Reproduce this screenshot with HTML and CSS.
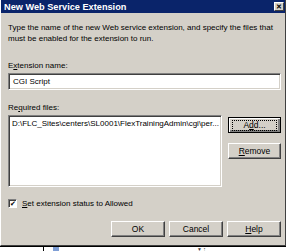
FILE: index.html
```html
<!DOCTYPE html>
<html lang="en">
<head>
    <meta charset="UTF-8">
    <title>New Web Service Extension</title>
    <link rel="stylesheet" href="styles.css">
</head>
<body>
    <div class="window">
        <div class="titlebar">
            <span class="title">New Web Service Extension</span>
            <span class="close">&#x2715;</span>
        </div>
        <div class="content">
            <p class="intro">Type the name of the new Web service extension, and specify the files that must be enabled for the extension to run.</p>

            <label class="field-label">E<u>x</u>tension name:</label>
            <div class="textbox">CGI Script</div>

            <label class="field-label">Re<u>q</u>uired files:</label>
            <div class="files-row">
                <div class="listbox">
                    <div class="list-item">D:\FLC_Sites\centers\SL0001\FlexTrainingAdmin\cgi\per...</div>
                </div>
                <div class="side-buttons">
                    <button class="btn focused"><span class="focus-ring">A<u>d</u>d...</span></button>
                    <button class="btn"><u>R</u>emove</button>
                </div>
            </div>

            <div class="check-row">
                <span class="checkbox">&#x2714;</span>
                <span><u>S</u>et extension status to Allowed</span>
            </div>

            <div class="actions">
                <button class="btn">OK</button>
                <button class="btn">Cancel</button>
                <button class="btn"><u>H</u>elp</button>
            </div>
        </div>
    </div>
    <div class="behind">
        <span class="behind-divider"></span>
        <span class="behind-icon"></span>
        <span class="behind-arrows">&#x25BC; &#x2191;</span>
    </div>
</body>
</html>
```

FILE: styles.css
```css
body {
    margin: 0;
    width: 286px;
    height: 251px;
    overflow: hidden;
    font-family: "Liberation Sans", Tahoma, sans-serif;
    font-size: 8px;
    color: #000;
    background: #fff;
}
u {
    text-decoration: underline;
}
.window {
    height: 246px;
    box-sizing: border-box;
    background: #d4d0c8;
    border-left: 1px solid #fff;
    border-right: 1px solid #404040;
    border-bottom: 1px solid #404040;
    display: flex;
    flex-direction: column;
}
.titlebar {
    height: 13px;
    background: #0a246a;
    display: flex;
    align-items: center;
    justify-content: space-between;
    padding: 0 1px 0 3px;
}
.title {
    color: #fff;
    font-weight: bold;
    font-size: 9.2px;
}
.close {
    width: 10px;
    height: 9px;
    background: #d4d0c8;
    border: 1px solid;
    border-color: #fff #404040 #404040 #fff;
    font-size: 7px;
    font-weight: bold;
    line-height: 8px;
    text-align: center;
    box-sizing: border-box;
}
.content {
    flex: 1;
    padding: 0 4px 0 7px;
    display: flex;
    flex-direction: column;
}
.intro {
    margin: 9px 0 0;
    line-height: 11px;
    padding-right: 3px;
}
.field-label {
    display: block;
    line-height: 11px;
}
.intro + .field-label {
    margin-top: 16px;
}
.textbox {
    margin-top: 2px;
    height: 17px;
    box-sizing: border-box;
    background: #fff;
    border: 1px solid;
    border-color: #808080 #fff #fff #808080;
    box-shadow: inset 1px 1px #404040, inset -1px -1px #d4d0c8;
    padding: 0 4px;
    line-height: 15px;
}
.textbox + .field-label {
    margin-top: 12px;
}
.files-row {
    margin-top: 2px;
    display: flex;
    gap: 6px;
}
.listbox {
    width: 216px;
    height: 72px;
    box-sizing: border-box;
    background: #fff;
    border: 1px solid;
    border-color: #808080 #fff #fff #808080;
    box-shadow: inset 1px 1px #404040, inset -1px -1px #d4d0c8;
    padding: 2px 3px;
    overflow: hidden;
}
.list-item {
    white-space: nowrap;
    line-height: 11px;
}
.side-buttons {
    display: flex;
    flex-direction: column;
    gap: 10px;
    padding-top: 2px;
}
.btn {
    font-family: inherit;
    font-size: 8.5px;
    color: #000;
    width: 54px;
    height: 16px;
    padding: 0;
    background: #d4d0c8;
    border: 1px solid;
    border-color: #fff #404040 #404040 #fff;
    box-shadow: inset -1px -1px #808080;
    border-radius: 0;
}
.side-buttons .btn {
    width: 53px;
}
.btn.focused {
    border: 1px solid #000;
    box-shadow: inset 1px 1px #fff, inset -2px -2px #808080;
    display: flex;
    align-items: center;
    justify-content: center;
}
.focus-ring {
    width: 43px;
    height: 9px;
    line-height: 9px;
    border: 1px dotted #000;
}
.check-row {
    margin-top: 12px;
    display: flex;
    align-items: center;
    gap: 5px;
}
.checkbox {
    width: 9px;
    height: 9px;
    box-sizing: border-box;
    background: #fff;
    border: 1px solid;
    border-color: #808080 #fff #fff #808080;
    box-shadow: inset 1px 1px #404040;
    font-size: 7px;
    line-height: 8px;
    text-align: center;
}
.actions {
    margin-top: 13px;
    display: flex;
    justify-content: flex-end;
    gap: 4px;
}
.behind {
    height: 5px;
    border-top: 1px solid #000;
    display: flex;
    align-items: flex-start;
    font-size: 5px;
    line-height: 5px;
}
.behind-divider {
    width: 1px;
    height: 5px;
    background: #000;
    margin-left: 43px;
}
.behind-icon {
    width: 6px;
    height: 4px;
    background: #7f9fd6;
    margin-left: 9px;
}
.behind-arrows {
    margin-left: 138px;
    color: #404040;
}
```
